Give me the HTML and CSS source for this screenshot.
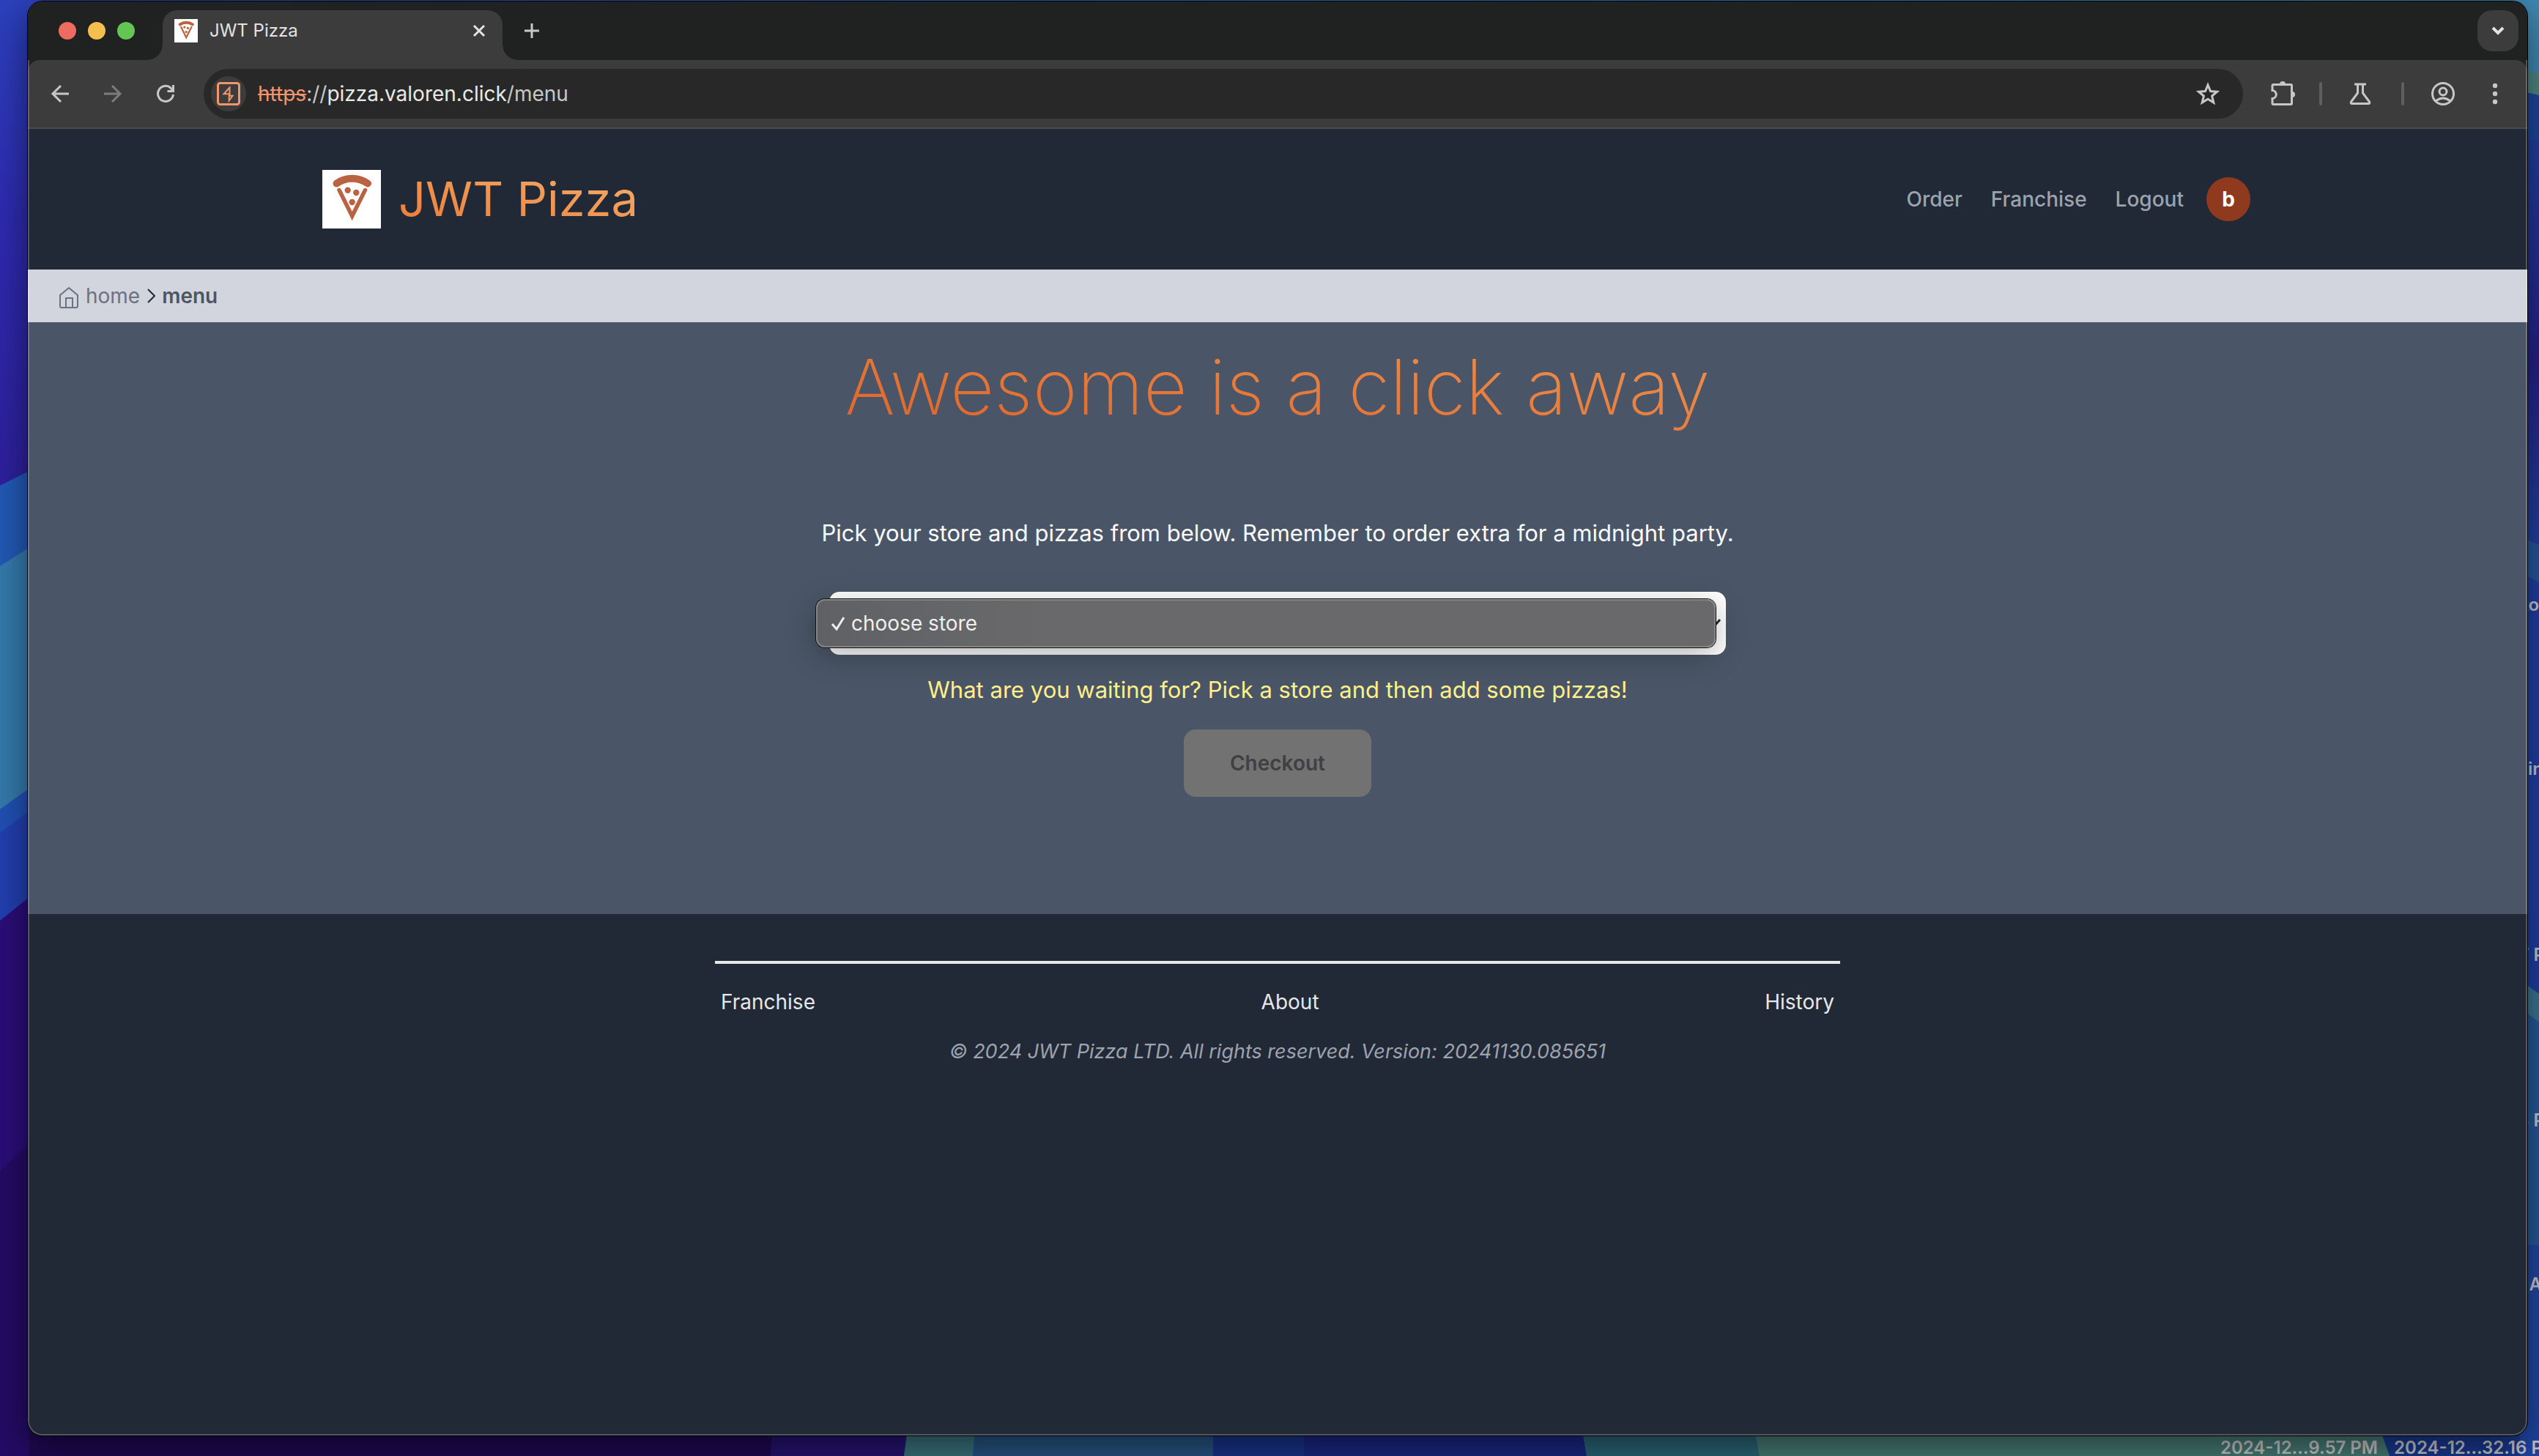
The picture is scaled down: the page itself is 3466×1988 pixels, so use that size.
FILE: index.html
```
<!DOCTYPE html>
<html lang="en">
<head>
<meta charset="utf-8">
<title>JWT Pizza</title>
<link rel="stylesheet" href="styles.css">
</head>
<body>
<svg class="wallpaper" viewBox="0 0 3466 1988" preserveAspectRatio="none" aria-hidden="true">
  <defs>
    <linearGradient id="top"><stop offset="0" stop-color="#2a3bb5"/><stop offset=".5" stop-color="#2667b5"/><stop offset="1" stop-color="#3f87b0"/></linearGradient>
    <linearGradient id="side" x2="0" y2="1"><stop offset="0" stop-color="#2b41bd"/><stop offset=".45" stop-color="#2e2ab0"/><stop offset="1" stop-color="#2d209c"/></linearGradient>
    <linearGradient id="dusk" x2="0" y2="1"><stop offset="0" stop-color="#1f3f9f"/><stop offset=".55" stop-color="#24208a"/><stop offset="1" stop-color="#1f409f"/></linearGradient>
  </defs>
  <rect width="3466" height="1988" fill="url(#top)"/>
  <path fill="url(#side)" d="M0 0H60V640L0 663Z"/>
  <path fill="#2259b5" d="M0 663L60 633V740L0 773Z"/>
  <path fill="#347aac" d="M0 773L60 735V1071L0 1105Z"/>
  <path fill="#2150b4" d="M0 1105L60 1062V1098L0 1137Z"/>
  <path fill="#223fb0" d="M0 1137L60 1092V1212L0 1257Z"/>
  <path fill="#2b0d78" d="M0 1257L60 1209V1547L0 1598Z"/>
  <path fill="#240b64" d="M0 1598L60 1545V1988H0Z"/>
  <path fill="#1e0850" d="M40 1940H1055V1988H40Z"/>
  <path fill="#25126e" d="M1055 1940H1240L1234 1988H1052Z"/>
  <path fill="#38717a" d="M1241 1940H1332L1328 1988H1234Z"/>
  <path fill="#265280" d="M1332 1940H1656V1988H1328Z"/>
  <path fill="#183287" d="M1656 1940H1780V1988H1656Z"/>
  <path fill="#18267f" d="M1780 1940H2158L2166 1988H1780Z"/>
  <path fill="#296274" d="M2158 1940H2393L2402 1988H2166Z"/>
  <path fill="#467973" d="M2393 1940H3245L3262 1988H2402Z"/>
  <path fill="#19388c" d="M3245 1940H3466V1988H3262Z"/>
  <path fill="#4d8580" d="M3440 94L3466 101V130L3440 124Z"/>
  <path fill="#1d459f" d="M3440 124L3466 130V200H3440Z"/>
  <path fill="url(#dusk)" d="M3440 190H3466V745L3440 733Z"/>
  <path fill="#23559d" d="M3440 733L3466 745V795L3440 780Z"/>
  <path fill="#1e3da3" d="M3440 780L3466 795V1400L3440 1384Z"/>
  <path fill="#38748f" d="M3440 1338L3466 1357V1396L3440 1376Z"/>
  <path fill="#235799" d="M3440 1376L3466 1396V1720H3440Z"/>
  <path fill="#1f45a2" d="M3440 1700H3466V1988H3440Z"/>
</svg>
<span class="file file-a">Photo</span>
<span class="file file-b">Login</span>
<span class="file file-c">7 PM</span>
<span class="file file-d">3 PM</span>
<span class="file file-e">A</span>
<span class="file file-f">2024-12…9.57 PM</span>
<span class="file file-g">2024-12…32.16 PM</span>

<svg class="symbols" aria-hidden="true">
  <symbol id="pizza" viewBox="0 0 80 80">
    <rect width="80" height="80" fill="#fff"/>
    <g fill="none" stroke="#bb6240" stroke-linecap="round">
      <path stroke-width="10" d="M19.500 18.500C32 9.500 49 9.500 62 18.500"/>
      <path stroke-width="5.500" d="M23 27.500L40.700 63L58.500 27.500"/>
    </g>
    <g fill="#bb6240"><circle cx="34.700" cy="27.700" r="4.200"/><circle cx="46.300" cy="31" r="4.200"/><circle cx="40.700" cy="44" r="4.200"/></g>
  </symbol>
</svg>

<div class="window">
  <div class="tabs">
    <span class="light red"></span><span class="light yellow"></span><span class="light green"></span>
    <div class="tab">
      <svg class="favicon"><use href="#pizza"/></svg>
      <span class="tab-title">JWT Pizza</span>
      <button class="plain" aria-label="Close tab"><svg width="20" height="20" viewBox="0 0 20 20"><path d="M3 3L17 17M17 3L3 17"/></svg></button>
    </div>
    <button class="plain" aria-label="New tab"><svg width="24" height="24" viewBox="0 0 24 24"><path d="M12 2V22M2 12H22"/></svg></button>
    <button class="tab-search" aria-label="Search tabs"><svg width="20" height="20" viewBox="0 0 20 20"><path d="M3 6L10 13L17 6"/></svg></button>
  </div>
  <div class="toolbar">
    <button class="plain" aria-label="Back"><svg width="28" height="28" viewBox="0 0 28 28"><path d="M26 14H4M15 3L4 14L15 25"/></svg></button>
    <button class="plain dim" aria-label="Forward"><svg width="28" height="28" viewBox="0 0 28 28"><path d="M2 14H24M13 3L24 14L13 25"/></svg></button>
    <button class="plain" aria-label="Reload"><svg width="28" height="28" viewBox="0 0 28 28"><path d="M24.500 15A10.500 10.500 0 1 1 21 6L24 9M24.500 2V10.500H16.500"/><path class="solid" d="M24.500 5V10.500H19Z"/></svg></button>
    <div class="address">
      <span class="site"><svg width="32" height="32" viewBox="0 0 32 32"><rect x="1.500" y="1.500" width="29" height="29" rx="3"/><path class="bolt" d="M17.500 7.500L9.500 16.200H16.700V25.500L21.500 18.800H17.500Z"/></svg></span>
      <span class="url"><s>https</s>://<b>pizza.valoren.click</b>/menu</span>
      <button class="plain" aria-label="Bookmark"><svg width="32" height="32" viewBox="0 0 32 32"><path d="M16 4L19.500 12.500L28.500 13.200L21.600 19L23.800 28L16 23.200L8.200 28L10.400 19L3.500 13.200L12.500 12.500Z"/></svg></button>
    </div>
    <button class="plain ext" aria-label="Extensions"><svg width="36" height="36" viewBox="0 0 36 36"><path d="M4 7Q4 5.500 5.500 5.500H29Q30.500 5.500 30.500 7V31Q30.500 32.500 29 32.500H5.500Q4 32.500 4 31V24.500C11 24 11 14 4 13.500Z"/><path class="solid" d="M14 5A4 4 0 0 1 22 5ZM31 15A4 4 0 0 1 31 23Z"/></svg></button>
    <i class="bar"></i>
    <button class="plain" aria-label="Labs"><svg width="32" height="32" viewBox="0 0 32 32"><path d="M8 3H24M12.500 3V15L3.500 27Q2.500 29.500 5 29.500H27Q29.500 29.500 28.500 27L19.500 15V3"/></svg></button>
    <i class="bar"></i>
    <button class="plain" aria-label="Profile"><svg width="34" height="34" viewBox="0 0 34 34"><circle cx="17" cy="17" r="14.500"/><circle cx="17" cy="14" r="5"/><path d="M7 27Q17 19 27 27"/></svg></button>
    <button class="plain more" aria-label="Menu"><svg width="8" height="32" viewBox="0 0 8 32"><g class="solid"><circle cx="4" cy="5" r="3.200"/><circle cx="4" cy="16" r="3.200"/><circle cx="4" cy="27" r="3.200"/></g></svg></button>
  </div>

  <header class="header">
    <svg class="logo"><use href="#pizza"/></svg>
    <span class="brand">JWT Pizza</span>
    <nav class="nav">
      <a href="#">Order</a><a href="#">Franchise</a><a href="#">Logout</a>
      <a class="avatar" href="#">b</a>
    </nav>
  </header>
  <nav class="crumbs" aria-label="Breadcrumb">
    <svg class="home" width="28" height="32" viewBox="0 0 28 32"><path d="M2 12L14 2L26 12V27Q26 29 24 29H4Q2 29 2 27ZM10 29V16H19V29"/></svg>
    <a href="#">home</a>
    <svg class="chevron" width="12" height="20" viewBox="0 0 12 20"><path d="M2 1L11 10L2 19"/></svg>
    <b>menu</b>
  </nav>
  <main class="main">
    <h1>Awesome is a click away</h1>
    <p class="intro">Pick your store and pizzas from below. Remember to order extra for a midnight party.</p>
    <div class="picker">
      <select aria-label="Store"><option>choose store</option></select>
      <svg class="caret" width="20" height="14" viewBox="0 0 20 14"><path d="M2 2L10 11L18 2"/></svg>
      <div class="popup"><svg width="20" height="22" viewBox="0 0 20 22"><path d="M2 12L8 19L18 3"/></svg><span>choose store</span></div>
    </div>
    <p class="hint">What are you waiting for? Pick a store and then add some pizzas!</p>
    <button class="checkout" disabled>Checkout</button>
  </main>
  <footer class="footer">
    <div class="links"><a href="#">Franchise</a><a href="#">About</a><a href="#">History</a></div>
    <p>© 2024 JWT Pizza LTD. All rights reserved. Version: 20241130.085651</p>
  </footer>
</div>
</body>
</html>
```
FILE: styles.css
```
* { box-sizing: border-box; }
body {
  margin: 0;
  min-height: 100vh;
  padding: 2px 16px 28px 38px;
  display: flex;
  position: relative;
  overflow: hidden;
  font-family: Inter, "Liberation Sans", sans-serif;
  font-size: 28px;
  line-height: 40px;
}
a { color: inherit; text-decoration: none; }
p, h1 { margin: 0; }
button { font: inherit; border: 0; }
svg { display: block; flex: none; fill: none; stroke: currentColor; stroke-width: 3; }
.symbols { position: absolute; width: 0; height: 0; }
.symbols, .wallpaper, .logo, .favicon { stroke: none; }
.wallpaper { position: absolute; inset: 0; width: 100%; height: 100%; }
.solid { fill: currentColor; stroke: none; }

/* Desktop file labels, partly hidden behind the window */
.file {
  position: absolute;
  color: #c4c6cb;
  font-size: 24px;
  line-height: 28px;
  font-weight: 600;
  white-space: nowrap;
}
.file-a { right: 0; top: 812px; }
.file-b { right: -6px; top: 1036px; }
.file-c { right: -30px; top: 1290px; }
.file-d { right: -30px; top: 1516px; }
.file-e { right: -4px; top: 1740px; }
.file-f { right: 220px; top: 1963px; }
.file-g { right: -27px; top: 1963px; }

.window {
  position: relative;
  flex: 1;
  display: flex;
  flex-direction: column;
  overflow: hidden;
  border-radius: 20px;
  background: #222936;
  box-shadow: 0 0 0 1px #000, 0 16px 50px rgba(0, 0, 0, .5);
}
.window::after {
  content: "";
  position: absolute;
  inset: 0;
  border: 2px solid rgba(255, 255, 255, .22);
  border-radius: 20px;
  pointer-events: none;
}

.tabs {
  display: flex;
  align-items: center;
  height: 80px;
  padding: 0 12px 0 42px;
  background: #202221;
  z-index: 1;
}
.light { width: 24px; height: 24px; margin-right: 16px; border-radius: 50%; }
.red { background: #ed6b5f; }
.yellow { background: #f5bf4f; }
.green { background: #62c554; }
.tab {
  position: relative;
  align-self: flex-end;
  display: flex;
  align-items: center;
  gap: 16px;
  width: 464px;
  height: 68px;
  margin: 0 28px 0 22px;
  padding: 0 22px 12px 16px;
  border-radius: 20px 20px 0 0;
  background: #3c3c3c;
  color: #e3e3e3;
  font-size: 24px;
}
.tab::before, .tab::after {
  content: "";
  position: absolute;
  bottom: 0;
  width: 20px;
  height: 20px;
}
.tab::before { right: 100%; background: radial-gradient(circle at 0 0, transparent 19px, #3c3c3c 20px); }
.tab::after { left: 100%; background: radial-gradient(circle at 100% 0, transparent 19px, #3c3c3c 20px); }
.favicon { width: 32px; height: 32px; }
.tab-title { flex: 1; }
.plain { display: flex; padding: 0; background: none; color: #c7c7c7; }
.tab .plain { color: #e3e3e3; }
.toolbar .dim { color: #7c7c7c; }
.tab-search {
  display: flex;
  align-items: center;
  justify-content: center;
  width: 56px;
  height: 56px;
  margin-left: auto;
  border-radius: 20px;
  background: #3c3c3c;
  color: #e3e3e3;
}
.tab-search svg { stroke-width: 4; }

.toolbar {
  display: flex;
  align-items: center;
  gap: 44px;
  height: 94px;
  padding: 0 40px 0 30px;
  border-bottom: 2px solid #4a4a4a;
  border-radius: 16px 16px 0 0;
  background: #3c3c3c;
  box-shadow: 0 -16px 0 0 #202221;
}
.address {
  flex: 1;
  display: flex;
  align-items: center;
  gap: 16px;
  height: 68px;
  margin-left: -6px;
  padding: 0 32px 0 10px;
  border-radius: 34px;
  background: #282828;
}
.site {
  display: flex;
  align-items: center;
  justify-content: center;
  width: 48px;
  height: 48px;
  border-radius: 50%;
  background: #3c3c3c;
  color: #f0956c;
}
.bolt { stroke-width: 2; }
.url { flex: 1; color: #c7c7c7; }
.url b { font-weight: 400; color: #e8e8e8; }
.url s { color: #f0956c; }
.ext { margin: 0 -8px; }
.bar { width: 4px; height: 32px; margin: 0 -8px 0 -4px; border-radius: 2px; background: #5f5f5f; }
.more { margin-left: 6px; }

.header {
  display: flex;
  align-items: center;
  height: 192px;
  padding: 0 378px 0 402px;
}
.logo { width: 80px; height: 80px; }
.brand {
  margin-left: 24px;
  font-size: 65px;
  line-height: 80px;
  background: linear-gradient(to top right, #ea7a35, #f5b06e);
  background-clip: text;
  color: transparent;
}
.nav { display: flex; align-items: center; gap: 39px; margin-left: auto; color: #9ca3af; font-weight: 500; }
.avatar {
  width: 60px;
  margin-left: -8px;
  border-radius: 50%;
  background: #8f3a1f;
  color: #fff;
  font-weight: 700;
  line-height: 60px;
  text-align: center;
}

.crumbs {
  display: flex;
  align-items: center;
  gap: 9px;
  height: 72px;
  padding: 0 42px;
  background: #d2d5dd;
  color: #6b7280;
}
.crumbs svg { stroke-width: 2; }
.crumbs .home { margin-top: 6px; }
.crumbs b { color: #4b5563; font-weight: 600; }
.crumbs .chevron { color: #1f2937; }

.main {
  display: flex;
  flex-direction: column;
  align-items: center;
  padding: 28px 0 160px;
  background: #4a5667;
}
h1 {
  font-size: 104px;
  line-height: 120px;
  font-weight: 200;
  padding-bottom: 24px;
  background: linear-gradient(to top right, #dd5f25, #f0934f);
  background-clip: text;
  color: transparent;
}
.intro, .hint { font-size: 31px; line-height: 48px; }
.intro { margin-top: 92px; color: #f9fafb; }
.picker { position: relative; width: 1224px; max-width: 100%; margin-top: 56px; }
.picker select {
  display: block;
  width: 100%;
  height: 86px;
  padding: 0 32px;
  appearance: none;
  border: 0;
  border-radius: 14px;
  background: #fff;
  color: #1f2937;
  font: inherit;
}
.caret { position: absolute; right: 6px; top: 36px; color: #1f2937; }
.popup {
  position: absolute;
  left: -18px;
  right: 14px;
  top: 10px;
  display: flex;
  align-items: center;
  gap: 8px;
  height: 66px;
  padding-left: 18px;
  border: 2px solid #858587;
  border-radius: 12px;
  background: linear-gradient(90deg, #5f6164, #69696b 25%);
  box-shadow: 0 0 0 1px #111, 0 10px 40px rgba(0, 0, 0, .3);
  color: #eee;
}
.hint { margin-top: 24px; color: #fef08a; }
.checkout {
  width: 256px;
  height: 92px;
  margin-top: 30px;
  border-radius: 16px;
  background: #727272;
  color: #404040;
  font-weight: 600;
}

.footer { width: 1536px; max-width: 100%; margin: 64px auto 0; text-align: center; }
.links {
  display: flex;
  justify-content: space-between;
  padding: 32px 8px 28px;
  border-top: 4px solid #e5e7eb;
  color: #e5e7eb;
}
.footer p { color: #9ca3af; font-size: 27px; font-style: italic; }
```
